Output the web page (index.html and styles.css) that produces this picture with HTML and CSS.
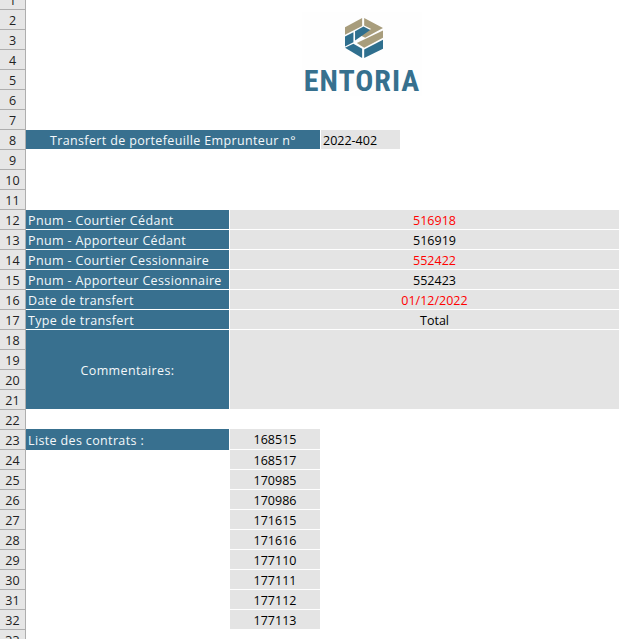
FILE: index.html
```html
<!DOCTYPE html>
<html lang="fr">
<head>
<meta charset="utf-8">
<title>Transfert de portefeuille</title>
<link rel="stylesheet" href="styles.css">
</head>
<body>
<div class="sheet">
  <div class="head first">1</div><div class="head r2">2</div><div class="head r3">3</div><div class="head r4">4</div><div class="head r5">5</div><div class="head r6">6</div><div class="head r7">7</div><div class="head r8">8</div><div class="head r9">9</div><div class="head r10">10</div><div class="head r11">11</div><div class="head r12">12</div><div class="head r13">13</div><div class="head r14">14</div><div class="head r15">15</div><div class="head r16">16</div><div class="head r17">17</div><div class="head r18">18</div><div class="head r19">19</div><div class="head r20">20</div><div class="head r21">21</div><div class="head r22">22</div><div class="head r23">23</div><div class="head r24">24</div><div class="head r25">25</div><div class="head r26">26</div><div class="head r27">27</div><div class="head r28">28</div><div class="head r29">29</div><div class="head r30">30</div><div class="head r31">31</div><div class="head r32">32</div><div class="head r33">33</div>

  <div class="cell blue center r8 span-title">Transfert de portefeuille Emprunteur n°</div>
  <div class="cell grey left-text r8 col-d">2022-402</div>

  <div class="cell blue r12 col-b">Pnum - Courtier Cédant</div>
  <div class="cell grey center red r12 span-wide">516918</div>
  <div class="cell blue r13 col-b">Pnum - Apporteur Cédant</div>
  <div class="cell grey center r13 span-wide">516919</div>
  <div class="cell blue r14 col-b">Pnum - Courtier Cessionnaire</div>
  <div class="cell grey center red r14 span-wide">552422</div>
  <div class="cell blue r15 col-b">Pnum - Apporteur Cessionnaire</div>
  <div class="cell grey center r15 span-wide">552423</div>
  <div class="cell blue r16 col-b">Date de transfert</div>
  <div class="cell grey center red r16 span-wide">01/12/2022</div>
  <div class="cell blue r17 col-b">Type de transfert</div>
  <div class="cell grey center r17 span-wide">Total</div>
  <div class="cell blue center col-b merged">Commentaires:</div>
  <div class="cell grey span-wide merged"></div>

  <div class="cell blue r23 col-b lifted">Liste des contrats :</div>
  <div class="cell grey center r23 col-c lifted-grey">168515</div>
  <div class="cell grey center r24 col-c">168517</div>
  <div class="cell grey center r25 col-c">170985</div>
  <div class="cell grey center r26 col-c">170986</div>
  <div class="cell grey center r27 col-c">171615</div>
  <div class="cell grey center r28 col-c">171616</div>
  <div class="cell grey center r29 col-c">177110</div>
  <div class="cell grey center r30 col-c">177111</div>
  <div class="cell grey center r31 col-c">177112</div>
  <div class="cell grey center r32 col-c">177113</div>

  <div class="logo">
    <svg class="mark" viewBox="15 12 113 121" preserveAspectRatio="none" aria-hidden="true">
      <path class="tan" d="M15 40 66 12V36L15 63Z"/>
      <path class="tan" d="M72 12 128 42 75 72 57 63 93 45 72 35Z"/>
      <path class="tan" d="M50 88 128 50V72L72 102Z"/>
      <path class="teal" d="M15 68 40 55V85L15 98Z"/>
      <path class="teal" d="M45 52 70 38 90 48 45 80Z"/>
      <path class="teal" d="M15 102 40 90 66 105V133Z"/>
      <path class="teal" d="M72 107 128 78V105L72 133Z"/>
    </svg>
    <span class="word">ENTORIA</span>
  </div>
</div>
</body>
</html>
```
FILE: styles.css
```css
html, body {
  margin: 0;
  padding: 0;
  height: 100%;
  overflow: hidden;
  background: #fff;
}
.sheet {
  position: relative;
  width: 640px;
  height: 670px;
  margin-top: -10px;
  display: grid;
  grid-template-columns: 26px 204px 91px 80px 239px;
  grid-auto-rows: 20px;
  font-family: "Open Sans", "Liberation Sans", sans-serif;
  font-size: 12.5px;
  color: #000;
}
.head {
  grid-column: 1;
  background: #e6e6e6;
  border-right: 1px solid #aeaeae;
  border-bottom: 1px solid #aeaeae;
  color: #222;
  display: flex;
  align-items: center;
  justify-content: center;
  padding-top: 1px;
  box-sizing: border-box;
}
.first { grid-row: 1; }
.r2 { grid-row: 2; } .r3 { grid-row: 3; } .r4 { grid-row: 4; } .r5 { grid-row: 5; }
.r6 { grid-row: 6; } .r7 { grid-row: 7; } .r8 { grid-row: 8; } .r9 { grid-row: 9; }
.r10 { grid-row: 10; } .r11 { grid-row: 11; } .r12 { grid-row: 12; } .r13 { grid-row: 13; }
.r14 { grid-row: 14; } .r15 { grid-row: 15; } .r16 { grid-row: 16; } .r17 { grid-row: 17; }
.r18 { grid-row: 18; } .r19 { grid-row: 19; } .r20 { grid-row: 20; } .r21 { grid-row: 21; }
.r22 { grid-row: 22; } .r23 { grid-row: 23; } .r24 { grid-row: 24; } .r25 { grid-row: 25; }
.r26 { grid-row: 26; } .r27 { grid-row: 27; } .r28 { grid-row: 28; } .r29 { grid-row: 29; }
.r30 { grid-row: 30; } .r31 { grid-row: 31; } .r32 { grid-row: 32; } .r33 { grid-row: 33; }
.cell {
  display: flex;
  align-items: center;
  box-sizing: border-box;
  border-right: 1px solid #fff;
  border-bottom: 1px solid #fff;
  padding: 1px 2px 0;
  white-space: nowrap;
}
.blue { background: #38708f; background-clip: padding-box; color: #f4f8fa; letter-spacing: 0.36px; }
.grey { background: #e4e4e4; background-clip: padding-box; }
.center { justify-content: center; }
.red { color: #f00; }
.col-b { grid-column: 2; }
.col-c { grid-column: 3; }
.col-d { grid-column: 4; }
.span-title { grid-column: 2 / 4; }
.span-wide { grid-column: 3 / 6; }
.merged { grid-row: 18 / 22; }
.lifted { margin-top: -1px; border-bottom: 0; }
.lifted-grey { margin-top: -1px; }
.logo {
  position: absolute;
  left: 302px;
  top: 22px;
  width: 120px;
  height: 84px;
  display: flex;
  flex-direction: column;
  align-items: center;
  background: #fefefe;
}
.mark {
  width: 38px;
  height: 40px;
  margin-top: 6px;
  margin-left: 4px;
}
.tan { fill: #a89d7c; }
.teal { fill: #2f6f8e; }
.word {
  font-family: "Liberation Sans Narrow", "Roboto Condensed", "Liberation Sans", sans-serif;
  font-weight: 700;
  font-size: 30px;
  line-height: 26px;
  letter-spacing: 1px;
  color: #36708e;
  margin-top: 10px;
}
```
